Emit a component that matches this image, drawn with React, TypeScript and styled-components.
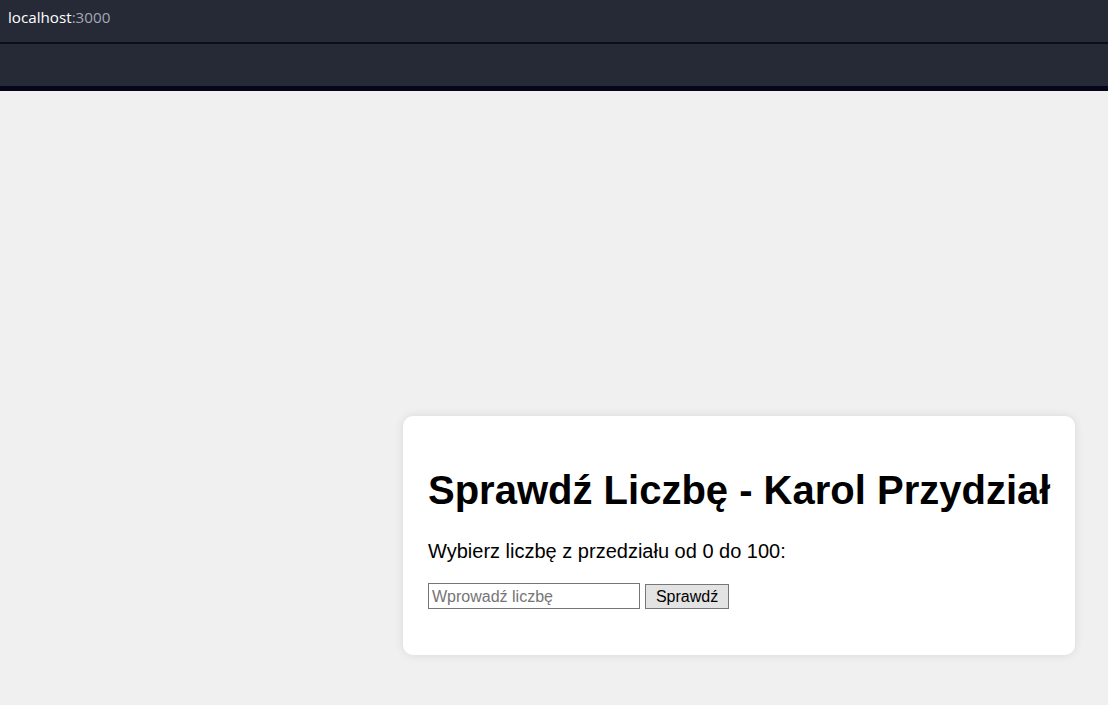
import React from "react";
import styled, { createGlobalStyle } from "styled-components";

const Global = createGlobalStyle`
  html, body { margin: 0; padding: 0; }
  body { background: #f0f0f0; font-family: "Liberation Sans", Arial, sans-serif; }
`;

const Chrome = styled.header`
  display: flex;
  flex-direction: column;
  background: #252a36;
`;

const AddressBar = styled.div`
  height: 44px;
  box-sizing: border-box;
  display: flex;
  align-items: center;
  padding: 0 0 8px 8px;
  font-family: "Open Sans", "Noto Sans", sans-serif;
  font-size: 15.2px;
  color: #ffffff;
  border-bottom: 2px solid #0b0e1a;
`;

const Port = styled.span`
  color: #a3a8b4;
`;

const Toolbar = styled.div`
  height: 42px;
  border-bottom: 5px solid #05061a;
`;

const Page = styled.main`
  display: flex;
  justify-content: flex-end;
  padding: 325px 33px 0 0;
  height: 614px;
  box-sizing: border-box;
`;

const Card = styled.section`
  background: #ffffff;
  border-radius: 10px;
  box-shadow: 0 0 10px rgba(0, 0, 0, 0.1);
  padding: 25px;
  width: 672px;
  height: 239px;
  box-sizing: border-box;
  color: #000;
  display: flow-root;
`;

const Title = styled.h1`
  font-size: 40px;
  font-weight: bold;
  margin: 26px 0 27px;
  white-space: nowrap;
  line-height: 46px;
`;

const Text = styled.p`
  font-size: 20px;
  margin: 0 0 20px;
  line-height: 23px;
`;

const Row = styled.div`
  display: flex;
  align-items: flex-start;
  gap: 5px;
`;

const Input = styled.input`
  box-sizing: border-box;
  width: 212px;
  height: 26px;
  border: 1px solid #767676;
  padding: 3px 3px 1px;
  font-family: "Liberation Sans", Arial, sans-serif;
  font-size: 16px;
  outline: none;
  &::placeholder { color: #757575; }
`;

const Button = styled.button`
  box-sizing: border-box;
  height: 25px;
  margin-top: 1px;
  width: 84px;
  border: 1px solid #767676;
  background: #e3e3e3;
  font-family: "Liberation Sans", Arial, sans-serif;
  font-size: 16px;
  color: #000;
  padding: 0 6px;
`;

export default function App() {
  return (
    <>
      <Global />
      <Chrome>
        <AddressBar>
          localhost<Port>:3000</Port>
        </AddressBar>
        <Toolbar />
      </Chrome>
      <Page>
        <Card>
          <Title>Sprawdź Liczbę - Karol Przydział</Title>
          <Text>Wybierz liczbę z przedziału od 0 do 100:</Text>
          <Row>
            <Input type="number" placeholder="Wprowadź liczbę" />
            <Button>Sprawdź</Button>
          </Row>
        </Card>
      </Page>
    </>
  );
}
